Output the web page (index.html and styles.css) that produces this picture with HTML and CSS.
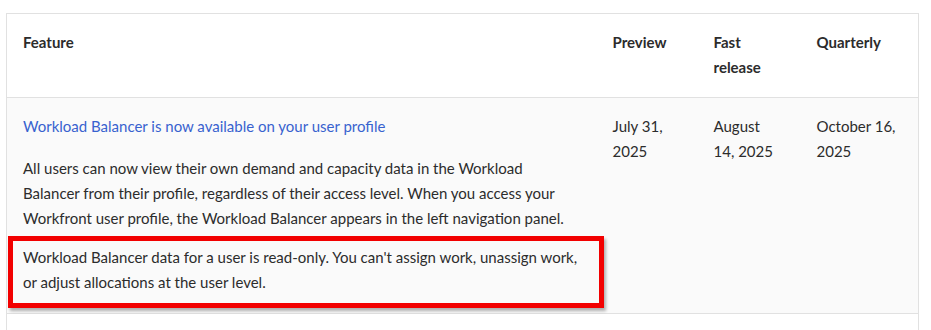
FILE: index.html
```html
<!DOCTYPE html>
<html lang="en">
<head>
<meta charset="utf-8">
<title>Release schedule</title>
<link rel="stylesheet" href="styles.css">
</head>
<body>
<table class="release-table">
  <colgroup>
    <col class="col-feature">
    <col class="col-preview">
    <col class="col-fast">
    <col class="col-quarterly">
  </colgroup>
  <thead>
    <tr>
      <th>Feature</th>
      <th>Preview</th>
      <th>Fast release</th>
      <th>Quarterly</th>
    </tr>
  </thead>
  <tbody>
    <tr class="row-alt">
      <td>
        <p class="feature-link"><a href="#">Workload Balancer is now available on your user profile</a></p>
        <p class="feature-desc">All users can now view their own demand and capacity data in the Workload Balancer from their profile, regardless of their access level. When you access your Workfront user profile, the Workload Balancer appears in the left navigation panel.</p>
        <div class="callout">
          <p>Workload Balancer data for a user is read-only. You can't assign work, unassign work, or adjust allocations at the user level.</p>
        </div>
      </td>
      <td>July 31, 2025</td>
      <td class="cell-fast">August 14, 2025</td>
      <td>October 16, 2025</td>
    </tr>
    <tr>
      <td>&nbsp;</td>
      <td></td>
      <td></td>
      <td></td>
    </tr>
  </tbody>
</table>
</body>
</html>
```

FILE: styles.css
```css
html, body {
  margin: 0;
  padding: 0;
  background: #ffffff;
}

body {
  padding: 13px 0 0 6px;
  font-family: Lato, "Open Sans", sans-serif;
  font-size: 15px;
  line-height: 25px;
  color: #2c2c2c;
}

.release-table {
  width: 912px;
  border-collapse: collapse;
  table-layout: fixed;
  border: 1px solid #e1e1e1;
}

.col-feature { width: 590px; }
.col-preview { width: 101px; }
.col-fast { width: 103px; }
.col-quarterly { width: 118px; }

.release-table th,
.release-table td {
  text-align: left;
  vertical-align: top;
  padding: 16px 16px 17px 16px;
  border-top: 1px solid #e1e1e1;
  border-bottom: 1px solid #e1e1e1;
}

.release-table th {
  font-weight: 700;
  color: #2c2c2c;
  background: #ffffff;
}

.release-table tbody td {
  padding-bottom: 18px;
}

.release-table td.cell-fast {
  padding-right: 24px;
}

.row-alt td {
  background: #fafafa;
}

.release-table p {
  margin: 0;
}

.feature-link {
  margin-bottom: 17px !important;
}

.feature-link a {
  color: #3862cf;
  text-decoration: none;
}

.feature-desc {
  margin-bottom: 14px !important;
}

/* highlighted note inside the feature cell */
.callout {
  position: relative;
}

.callout::after {
  content: "";
  position: absolute;
  left: -15px;
  right: -23px;
  top: -9px;
  bottom: -13px;
  border: 5px solid #f20000;
  box-shadow: 2px 3px 3px rgba(0, 0, 0, 0.3);
  pointer-events: none;
}
```
